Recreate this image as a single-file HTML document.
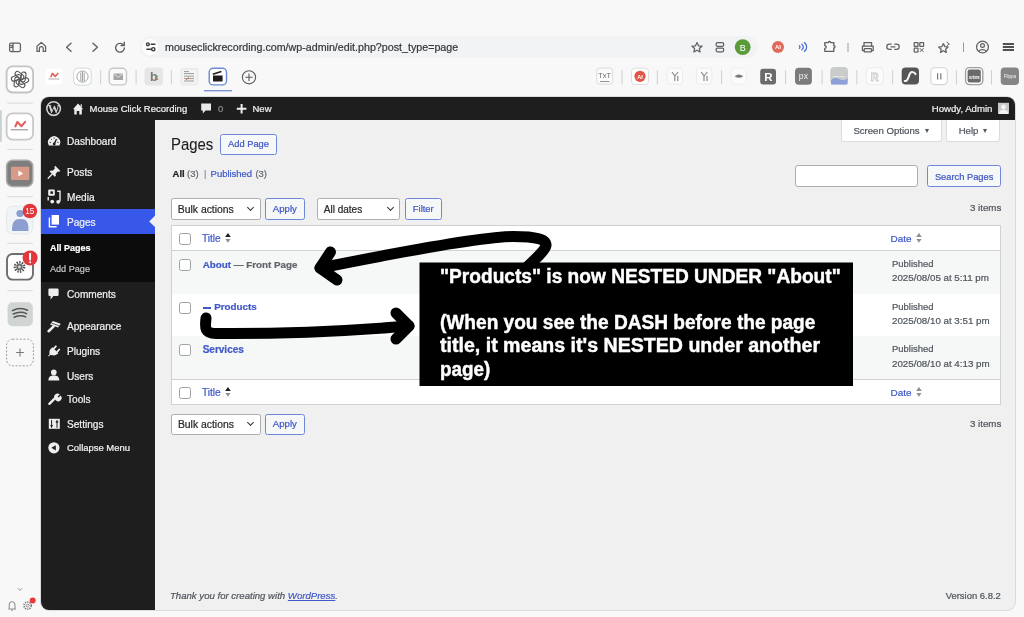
<!DOCTYPE html>
<html><head><meta charset="utf-8">
<style>
*{box-sizing:border-box;margin:0;padding:0}
html,body{width:1024px;height:617px;overflow:hidden;background:#f8f8f8;font-family:"Liberation Sans",sans-serif}
.a{position:absolute}
.t{position:absolute;white-space:nowrap;line-height:1}
#win{position:absolute;left:41px;top:97px;width:974.3px;height:512.8px;border-radius:8px;overflow:hidden;background:#f0f0f1;box-shadow:0 0 0 0.8px #d2d4d6}
#bar{position:absolute;left:0;top:0;width:975px;height:23px;background:#1e1e1e}
#menu{position:absolute;left:0;top:23px;width:114px;height:490px;background:#1e1e1e}
.mi{position:absolute;left:26px;color:#f0f0f0;font-size:10.1px;line-height:1;white-space:nowrap}
.btn{position:absolute;border:1px solid #7087d9;border-radius:2.5px;background:#f6f7f7;color:#3f57c7;font-size:9.5px;line-height:1;white-space:nowrap;display:flex;align-items:center;justify-content:center}
.sel{position:absolute;border:1px solid #aaadb1;border-radius:2.5px;background:#fff;color:#2a2a2a;font-size:10px;line-height:1;white-space:nowrap}
.cb{position:absolute;width:12px;height:12px;border:1px solid #9ea1a6;border-radius:2.5px;background:#fff}

.tab{top:119.5px;height:22.4px;background:#fff;border:1px solid #dcdcde;border-top:none;border-radius:0 0 3px 3px;box-shadow:0 0 0 0 #000}
.tri{width:0;height:0;border-left:2.6px solid transparent;border-right:2.6px solid transparent;border-top:4.2px solid #50575e}
.chev{position:absolute;width:5px;height:5px;border-right:1.1px solid #333;border-bottom:1.1px solid #333;transform:rotate(45deg)}
.sort{position:absolute;width:5.6px;height:10px}
.sort:before{content:"";position:absolute;left:0;top:-0.2px;border-left:3px solid transparent;border-right:3px solid transparent;border-bottom:4.4px solid #1e1e1e}
.sort:after{content:"";position:absolute;left:0.1px;top:5.8px;border-left:2.9px solid transparent;border-right:2.9px solid transparent;border-top:4.1px solid #9a9da2}
.t.ann{left:441px;font-size:20.3px;font-weight:bold;color:#fff;transform-origin:0 0;-webkit-text-stroke:0.45px #fff}
.t,.mi,.btn span{-webkit-text-stroke-width:0.22px}
#gw{position:absolute;left:0;top:0;width:1024px;height:617px;will-change:transform}
</style></head><body><div id="gw">


<!-- URL pill -->
<div class="a" style="left:139.8px;top:35.5px;width:618px;height:22px;border-radius:11px;background:#f2f3f4"></div>
<div class="a" style="left:142.2px;top:38.5px;width:16px;height:16px;border-radius:8px;background:#fff"></div>
<div class="t" style="left:165px;top:42.1px;font-size:10.7px;color:#383838">mouseclickrecording.com/wp-admin/edit.php?post_type=page</div>

<!-- BROWSER CHROME ICONS -->
<svg class="a" style="left:0;top:0" width="1024" height="617" viewBox="0 0 1024 617">
 <g fill="none" stroke="#606060" stroke-width="1.25" stroke-linecap="round" stroke-linejoin="round">
  <!-- sidebar -->
  <rect x="9.6" y="43.2" width="10.8" height="8.4" rx="1.6"/>
  <path d="M13 43.4 V51.4 M10.8 45.6 H12.2 M10.8 47.4 H12.2"/>
  <!-- home -->
  <path d="M37 51.4 V46.2 L41.3 42.4 L45.6 46.2 V51.4 H43.2 V48.6 A1.9 1.9 0 0 0 39.4 48.6 V51.4 Z"/>
  <!-- back / fwd -->
  <path d="M71 43.2 L66.6 47.2 L71 51.2" stroke-width="1.4"/>
  <path d="M93 43.2 L97.4 47.2 L93 51.2" stroke-width="1.4"/>
  <!-- reload -->
  <path d="M123.6 45.2 A4.4 4.4 0 1 0 124.4 48" stroke-width="1.4"/>
  <path d="M124.3 42.3 V45.6 H121" stroke-width="1.4"/>
  <!-- tune -->
  <g stroke="#3a3a3a" stroke-width="1.4"><circle cx="147.9" cy="44.3" r="1.4"/><path d="M151.2 44.3 H154.9"/>
  <circle cx="153.3" cy="49.2" r="1.6"/><path d="M146.9 49.2 H151.4"/></g>
  <!-- star -->
  <path d="M697 42.6 L698.5 45.8 L702 46.2 L699.4 48.5 L700.1 52 L697 50.2 L693.9 52 L694.6 48.5 L692 46.2 L695.5 45.8 Z"/>
  <!-- tabs -->
  <rect x="716.2" y="42.6" width="7.4" height="3.8" rx="1.2"/>
  <rect x="716.2" y="48" width="7.4" height="3.8" rx="1.2"/>
  <!-- puzzle -->
  <path d="M824.8 42.6 H828.4 A1.15 1.15 0 0 1 830.7 42.6 H833.8 V45.6 A1.2 1.2 0 0 1 833.8 48 V51.3 H824.8 V48.4 A1.4 1.4 0 0 0 824.8 45.6 Z" stroke-width="1.35"/>
  <!-- printer -->
  <path d="M864 46 V42.6 H871.6 V46"/>
  <path d="M864 50.6 H862.4 V46 H873.2 V50.6 H871.6"/>
  <rect x="864.2" y="48.6" width="7.2" height="3.2" rx="0.6"/>
  <!-- link -->
  <path d="M891.2 44.2 H889.4 A2.6 2.6 0 0 0 889.4 49.4 H891.2 M894.8 44.2 H896.6 A2.6 2.6 0 0 1 896.6 49.4 H894.8 M891 46.8 H895"/>
  <!-- qr -->
  <rect x="914.2" y="42.6" width="3.8" height="3.8" rx="0.5"/>
  <rect x="919.8" y="42.6" width="3.8" height="3.8" rx="0.5"/>
  <rect x="914.2" y="48.2" width="3.8" height="3.8" rx="0.5"/>
  <path d="M920 48.4 L923.4 51.8 M923.4 48.4 L920 51.8" stroke-width="1"/>
  <!-- star ai -->
  <path d="M943.4 43.6 L944.8 46.6 L948.2 47 L945.6 49.2 L946.3 52.4 L943.4 50.8 L940.5 52.4 L941.2 49.2 L938.6 47 L942 46.6 Z"/>
  <path d="M947.2 42 L948 43.4 L949.4 44 L948 44.6 L947.2 46" stroke-width="0.9"/>
  <!-- account -->
  <circle cx="982.5" cy="47" r="5.9"/>
  <circle cx="982.5" cy="45.4" r="1.9"/>
  <path d="M978.6 51.3 A4.4 3.2 0 0 1 986.4 51.3"/>
 </g>
 <!-- dividers -->
 <g stroke="#9a9a9a" stroke-width="1">
  <path d="M848 43 V52 M963.5 42.5 V52"/>
 </g>
 <!-- hamburger -->
 <path d="M1002.8 44 H1014 M1002.8 47 H1014 M1002.8 50 H1014" stroke="#505050" stroke-width="1.8"/>
 <!-- green B -->
 <circle cx="742.7" cy="47.2" r="7.9" fill="#5b9c3a"/>
 <text x="742.7" y="50.6" font-family="Liberation Sans" font-size="9" fill="#fff" text-anchor="middle">B</text>
 <!-- red AI -->
 <circle cx="778" cy="47" r="6" fill="#e06a5a"/>
 <text x="778" y="49.4" font-family="Liberation Sans" font-size="6" font-weight="bold" fill="#fff" text-anchor="middle">AI</text>
 <!-- blue waves -->
 <g fill="none" stroke="#4a6fd0" stroke-width="1.3" stroke-linecap="round">
  <path d="M799.4 45.8 A1.6 1.6 0 0 1 799.4 48.2"/>
  <path d="M801.8 44.2 A3.4 3.4 0 0 1 801.8 49.8"/>
  <path d="M804.4 42.6 A5.4 5.4 0 0 1 804.4 51.4"/>
 </g>
</svg>


<!-- EXTENSION ROW + LEFT RAIL -->
<svg class="a" style="left:0;top:0" width="1024" height="617" viewBox="0 0 1024 617" font-family="Liberation Sans">
 <!-- dividers row2 -->
 <g stroke="#cfcfcf" stroke-width="1">
  <path d="M100.6 70 V84.5 M136.1 70 V84.5 M171.4 70 V84.5 M622 70 V84.5 M657.3 70 V84.5 M721.6 70 V84.5 M785.6 70 V84.5 M822.1 70 V84.5 M856.8 70 V84.5 M892.6 70 V84.5 M956.4 70 V84.5 M991.5 70 V84.5"/>
 </g>
 <!-- netlify -->
 <rect x="45.6" y="68.7" width="16.9" height="15.8" rx="3" fill="#fff"/>
 <path d="M51 76.6 L52.4 73.4 L55.2 76.4 L57.8 73.4" fill="none" stroke="#e2605a" stroke-width="1.6" stroke-linecap="round" stroke-linejoin="round"/>
 <path d="M48.6 79 H59.4" stroke="#888" stroke-width="0.7"/>
 <!-- circle logo -->
 <rect x="73.7" y="68.1" width="17.5" height="17" rx="4" fill="#fff" stroke="#cfd9dc" stroke-width="1"/>
 <circle cx="82.5" cy="76.6" r="5.6" fill="none" stroke="#9a9a9a" stroke-width="0.9"/>
 <path d="M80.8 72.5 V81 M82.5 71.5 V81.5 M84.2 72.5 V81" stroke="#888" stroke-width="0.8"/>
 <!-- mail -->
 <rect x="109.2" y="68.3" width="17.3" height="16.6" rx="4" fill="#fafafa" stroke="#c6c9c9" stroke-width="1.4"/>
 <rect x="113.5" y="73.5" width="9.5" height="6.5" fill="#a5a5a5"/>
 <path d="M113.5 73.5 L118.25 77.3 L123 73.5" fill="none" stroke="#eee" stroke-width="0.8"/>
 <!-- b -->
 <rect x="144.4" y="67.6" width="18.6" height="18" rx="4" fill="#e6e6e6"/>
 <text x="153.7" y="81" font-size="12.5" font-weight="bold" fill="#7a7a7a" text-anchor="middle">b</text>
 <circle cx="157.2" cy="76.4" r="0.9" fill="#6fbf5a"/><circle cx="157.4" cy="79.2" r="0.9" fill="#e0704a"/>
 <!-- newspaper -->
 <rect x="180.4" y="67.8" width="18" height="17.6" rx="3" fill="#ececec"/>
 <rect x="182.5" y="70" width="13.8" height="13.4" fill="#f4f4f4"/>
 <path d="M184 71.6 H189 M184 73.6 H194 M184 76.2 H194 M184 78.6 H194 M184 81 H194" stroke="#9a9a9a" stroke-width="1"/>
 <path d="M186 80 L189 77.4" stroke="#d9534f" stroke-width="0.9"/>
 <!-- clapper -->
 <rect x="209.2" y="68.3" width="17.3" height="16.6" rx="4" fill="#fff" stroke="#6b89d4" stroke-width="1.4"/>
 <rect x="213" y="75.5" width="9.6" height="6" fill="#1e1e1e"/>
 <path d="M212.8 74.2 L221.4 71.4" stroke="#1e1e1e" stroke-width="1.6"/>
 <rect x="204" y="90" width="28" height="1.4" fill="#7b93d6"/>
 <!-- plus circle -->
 <circle cx="249" cy="77.3" r="6.6" fill="none" stroke="#5a5a5a" stroke-width="1.1"/>
 <path d="M249 73.6 V81 M245.3 77.3 H252.7" stroke="#5a5a5a" stroke-width="1.1"/>

 <!-- TxT -->
 <rect x="596.7" y="68.1" width="16" height="16" rx="3" fill="#fafafa" stroke="#dcdcdc" stroke-width="1"/>
 <text x="604.7" y="77.6" font-size="7.4" fill="#6a6a6a" text-anchor="middle">TxT</text>
 <path d="M600 81.5 H609.4" stroke="#7a7a7a" stroke-width="0.8"/>
 <!-- AI red 2 -->
 <rect x="631.5" y="68.1" width="17" height="16.4" rx="3.5" fill="#fff" stroke="#dedede" stroke-width="1"/>
 <circle cx="640" cy="76.3" r="5.6" fill="#e05548"/>
 <text x="640" y="78.6" font-size="5.6" font-weight="bold" fill="#fff" text-anchor="middle">AI</text>
 <!-- Y icons -->
 <rect x="667.2" y="68.2" width="15.4" height="16" rx="3" fill="#fbfbfb" stroke="#ececec" stroke-width="1"/>
 <path d="M672 72 L674.8 76 V81 M678 72 L675 76 M677.8 76 V81" fill="none" stroke="#8c8c8c" stroke-width="1.2"/>
 <rect x="696.4" y="68.2" width="15.4" height="16" rx="3" fill="#fbfbfb" stroke="#ececec" stroke-width="1"/>
 <path d="M701.2 72 L704 76 V81 M707.2 72 L704.2 76 M707 76 V81" fill="none" stroke="#8c8c8c" stroke-width="1.2"/>
 <!-- eye -->
 <rect x="731.2" y="68.2" width="15.4" height="16" rx="3" fill="#fbfbfb" stroke="#efefef" stroke-width="1"/>
 <path d="M734.6 76.2 Q738.9 72.6 743.2 76.2 Q738.9 79.4 734.6 76.2 Z" fill="#7a7a7a"/>
 <!-- R dark -->
 <rect x="760.2" y="68.7" width="15.8" height="15.8" rx="3" fill="#6b6b6b"/>
 <text x="768.3" y="80.8" font-size="11.5" font-weight="bold" fill="#fff" text-anchor="middle">R</text>
 <!-- px -->
 <rect x="795" y="67.8" width="16.9" height="17" rx="4" fill="#7b7b7b"/>
 <text x="803.4" y="78.8" font-size="8.6" fill="#f2f2f2" text-anchor="middle">px</text>
 <!-- wave -->
 <rect x="830.3" y="67.1" width="17.7" height="17.3" rx="4" fill="#c9cbcd"/>
 <path d="M831 80 Q835 76.5 839 79 T847.5 78.5 V84.4 H831 Z" fill="#8da0d8"/>
 <path d="M833 76.6 H845" stroke="#e6e6e6" stroke-width="1"/>
 <!-- R outline -->
 <rect x="866.2" y="67.8" width="17" height="16.8" rx="4" fill="#fcfcfc" stroke="#e6eced" stroke-width="1"/>
 <text x="874.7" y="80.6" font-size="11" font-weight="bold" fill="none" stroke="#c8c8c8" stroke-width="0.8" text-anchor="middle">R</text>
 <!-- flow -->
 <rect x="901.7" y="67.4" width="17.3" height="17.2" rx="4" fill="#555"/>
 <path d="M905.5 81 C909 81 908.5 72 912 72 C914 72 915 73 915.5 74" fill="none" stroke="#f4f4f4" stroke-width="2.2" stroke-linecap="round"/>
 <path d="M905.5 81 L904.8 81" stroke="#f4f4f4" stroke-width="2.2" stroke-linecap="round"/>
 <!-- pause -->
 <rect x="930.8" y="67.8" width="16.6" height="16.8" rx="4" fill="#fff" stroke="#d4d4d4" stroke-width="1.1"/>
 <path d="M937.6 73.2 V79.4 M940.8 73.2 V79.4" stroke="#7a7a7a" stroke-width="1.2"/>
 <!-- stm -->
 <rect x="965.6" y="67.6" width="17.2" height="17" rx="4" fill="#fff" stroke="#a0a0a0" stroke-width="1.4"/>
 <rect x="967.6" y="69.6" width="13.2" height="13" rx="2" fill="#6a6a6a"/>
 <text x="974.2" y="78.6" font-size="6" font-weight="bold" fill="#fff" text-anchor="middle">stm</text>
 <!-- flippa -->
 <rect x="1000.7" y="67.4" width="18.3" height="17.6" rx="4" fill="#858585"/>
 <text x="1009.9" y="78" font-size="4.6" fill="#f0f0f0" text-anchor="middle">Flippa</text>

 <!-- LEFT RAIL -->
 <g fill="none" stroke="#d9d9d9" stroke-width="1">
  <path d="M7.3 103.1 H32.8 M7.3 149.5 H32.8 M7.3 196.7 H32.8 M7.3 243.3 H32.8 M7.3 290.7 H32.8"/>
 </g>
 <rect x="0" y="110.4" width="1.8" height="31.4" fill="#c9d0d3"/>
 <!-- chatgpt -->
 <rect x="6.6" y="66.3" width="26.5" height="26.2" rx="6" fill="#fff" stroke="#c3c3c3" stroke-width="1.8"/>
 <g fill="none" stroke="#555" stroke-width="1.1" transform="translate(20 79.5) rotate(8)"><rect x="0.75" y="-7.90" width="4.50" height="9.80" rx="2.25" transform="rotate(0)"/><rect x="0.75" y="-7.90" width="4.50" height="9.80" rx="2.25" transform="rotate(60)"/><rect x="0.75" y="-7.90" width="4.50" height="9.80" rx="2.25" transform="rotate(120)"/><rect x="0.75" y="-7.90" width="4.50" height="9.80" rx="2.25" transform="rotate(180)"/><rect x="0.75" y="-7.90" width="4.50" height="9.80" rx="2.25" transform="rotate(240)"/><rect x="0.75" y="-7.90" width="4.50" height="9.80" rx="2.25" transform="rotate(300)"/></g>
 <!-- netlify rail -->
 <rect x="6.6" y="113.4" width="26.5" height="26.2" rx="6" fill="#fff" stroke="#c8c8c8" stroke-width="1.8"/>
 <path d="M15.4 126.4 L17.4 121.9 L21.4 126.2 L25.2 121.9" fill="none" stroke="#e2605a" stroke-width="2.1" stroke-linecap="round" stroke-linejoin="round"/>
 <path d="M10.8 129.8 H28" stroke="#777" stroke-width="0.9"/>
 <!-- youtube -->
 <rect x="6.6" y="160.3" width="26.2" height="26.1" rx="6" fill="#7e7e7e" stroke="#a9a9a9" stroke-width="1.5"/>
 <rect x="11" y="166.8" width="18.2" height="13.2" rx="1" fill="#d99a89"/>
 <path d="M18.4 170.6 L23.2 173.4 L18.4 176.2 Z" fill="#fff"/>
 <!-- person -->
 <rect x="6.6" y="206.2" width="26.2" height="27.8" rx="6" fill="#f1f4f6" stroke="#e4e8ea" stroke-width="1"/>
 <circle cx="20" cy="213.5" r="3.6" fill="#8a9fcf"/>
 <path d="M12 231 C12 222 14 219 20.5 219 C27 219 28.5 222 28.5 231 Z" fill="#8c9fd0"/>
 <circle cx="29.9" cy="211" r="7.3" fill="#e0383d"/>
 <text x="29.8" y="214" font-size="8.2" fill="#fff" text-anchor="middle">15</text>
 <!-- settings -->
 <rect x="7" y="254" width="26" height="25.6" rx="5.5" fill="#fff" stroke="#6d6d6d" stroke-width="1.9"/>
 <circle cx="19.5" cy="267" r="4.6" fill="none" stroke="#555" stroke-width="2.6" stroke-dasharray="1.4 1.2"/>
 <circle cx="19.5" cy="267" r="3.2" fill="#6a6a6a"/>
 <circle cx="19.5" cy="267" r="1.4" fill="#ddd"/>
 <circle cx="30.1" cy="257.9" r="7.5" fill="#e0383d"/>
 <path d="M30.1 253.6 V259.6" stroke="#fff" stroke-width="1.9" stroke-linecap="round"/>
 <circle cx="30.1" cy="262.3" r="1" fill="#fff"/>
 <!-- spotify -->
 <rect x="7.6" y="302.3" width="25.2" height="24" rx="5" fill="#d0d4d2"/>
 <g fill="none" stroke="#555" stroke-width="1.5" stroke-linecap="round">
  <path d="M12.4 310.6 Q20 306.8 27.6 310.2"/>
  <path d="M13.2 314 Q20 310.8 26.6 313.6"/>
  <path d="M14.2 317.2 Q20 314.6 25.6 316.8"/>
 </g>
 <!-- plus dashed -->
 <rect x="6.6" y="339.2" width="26.8" height="26.6" rx="6" fill="none" stroke="#9a9a9a" stroke-width="1" stroke-dasharray="2 1.6"/>
 <path d="M20 348.6 V356.4 M16.1 352.5 H23.9" stroke="#777" stroke-width="1.1"/>
 <!-- bottom -->
 <path d="M17.6 588.2 L19.8 590.4 L22 588.2" fill="none" stroke="#8a8a8a" stroke-width="0.9"/>
 <path d="M8.3 609 H16 M9.2 608.6 V605 A2.9 3.4 0 0 1 15 605 V608.6 M11.4 610.4 H12.8" fill="none" stroke="#7a7a7a" stroke-width="0.9"/>
 <circle cx="27.6" cy="605.6" r="3.6" fill="none" stroke="#7a7a7a" stroke-width="1.6" stroke-dasharray="1.3 1"/>
 <circle cx="27.6" cy="605.6" r="1.4" fill="none" stroke="#7a7a7a" stroke-width="0.8"/>
 <circle cx="32.7" cy="600.6" r="3" fill="#e63b3b"/>
</svg>
<div id="win">
  <div id="bar">
    <div class="t" style="left:48.5px;top:7px;font-size:9.5px;color:#f0f0f0">Mouse Click Recording</div>
    <div class="t" style="left:177px;top:7px;font-size:9.5px;color:#8c8f94">0</div>
    <div class="t" style="left:211.5px;top:7px;font-size:9.5px;color:#f0f0f0">New</div>
    <div class="t" style="left:890.8px;top:7.2px;font-size:9.6px;color:#f0f0f0">Howdy, Admin</div>
  </div>
  <div id="menu">
    <div class="mi" style="top:16.6px">Dashboard</div>
    <div class="mi" style="top:48.3px">Posts</div>
    <div class="mi" style="top:73px">Media</div>
    <div class="a" style="left:0;top:89px;width:114px;height:24.5px;background:#3858e9"></div>
    <div class="mi" style="top:98px">Pages</div>
    <div class="a" style="left:0;top:113.5px;width:114px;height:48px;background:#0c0c0c"></div>
    <div class="mi" style="left:9px;top:124.2px;font-size:9px;font-weight:bold;color:#fff">All Pages</div>
    <div class="mi" style="left:9px;top:144.5px;font-size:9.1px;color:#c5c5c5">Add Page</div>
    <div class="mi" style="top:170px">Comments</div>
    <div class="mi" style="top:202.2px">Appearance</div>
    <div class="mi" style="top:226.8px">Plugins</div>
    <div class="mi" style="top:251.8px">Users</div>
    <div class="mi" style="top:275.3px">Tools</div>
    <div class="mi" style="top:300.4px">Settings</div>
    <div class="mi" style="top:322.6px;font-size:9.45px">Collapse Menu</div>
  </div>
</div>



<!-- WP ICONS -->
<svg class="a" style="left:0;top:0" width="1024" height="617" viewBox="0 0 1024 617" font-family="Liberation Sans">
 <!-- admin bar -->
 <circle cx="53.6" cy="108.6" r="6.8" fill="none" stroke="#cfcfcf" stroke-width="1.6"/>
 <text x="53.7" y="112.8" font-family="Liberation Serif" font-size="12" font-weight="bold" fill="#d4d4d4" text-anchor="middle">W</text>
 <path d="M73 109.2 L78 103.6 L83.2 109.2 H81.8 V114.4 H79.3 V111 H76.7 V114.4 H74.3 V109.2 Z" fill="#f0f0f0"/>
 <path d="M81.2 104.2 V107" stroke="#f0f0f0" stroke-width="1.2"/>
 <path d="M201.2 103.6 H211 V110.6 H205.6 L202.8 113.6 V110.6 H201.2 Z" fill="#eaeaea"/>
 <path d="M241.6 104 V113.6 M236.8 108.8 H246.4" stroke="#f0f0f0" stroke-width="2"/>
 <rect x="998" y="102.8" width="11" height="11.1" fill="#c8c8c8"/>
 <circle cx="1003.5" cy="107" r="2.4" fill="#f5f5f5"/>
 <path d="M999 113.9 C999 110.6 1001 109.8 1003.5 109.8 C1006 109.8 1008 110.6 1008 113.9 Z" fill="#f5f5f5"/>

 <!-- sidebar -->
 <g fill="#eeeeee">
  <path d="M48.85 145.4 A6.1 6.1 0 1 1 59.35 145.4 Z"/>
  <path d="M63 0" />
 </g>
 <path d="M54.2 144 L56.4 139.2" stroke="#1e1e1e" stroke-width="1.4"/>
 <circle cx="54.2" cy="144" r="1.4" fill="#1e1e1e"/>
 <path d="M49.6 142.4 H51 M51 139 L51.9 139.9 M54.1 137.4 V138.8 M57.2 139 L56.3 139.9 M58.6 142.4 H57.2" stroke="#1e1e1e" stroke-width="0.8"/>
 <!-- pin -->
 <path d="M55.2 165.8 L60.4 171 L59.2 171.8 L57.9 171.5 L55.6 173.8 L55.9 175.8 L54.8 176.8 L49.6 171.6 L50.6 170.5 L52.6 170.8 L54.9 168.5 L54.4 167 Z" fill="#eeeeee"/>
 <path d="M52 174.2 L48.2 178.2" stroke="#eeeeee" stroke-width="1.3" stroke-linecap="round"/>
 <!-- media -->
 <rect x="48.2" y="189.4" width="6.6" height="6.4" rx="1" fill="#eeeeee"/>
 <rect x="50.4" y="191.4" width="2.6" height="2.4" fill="#1e1e1e"/>
 <path d="M48.2 197 V200.4 M57.2 191.2 H60 V201.4" stroke="#eeeeee" stroke-width="1.4" fill="none"/>
 <circle cx="52.2" cy="201.6" r="1.9" fill="#eeeeee"/><circle cx="58.2" cy="201.8" r="1.9" fill="#eeeeee"/>
 <!-- pages -->
 <rect x="51.6" y="215" width="7.4" height="9.6" fill="#fff"/>
 <path d="M49.4 217.4 V226.8 H56.6" fill="none" stroke="#fff" stroke-width="1.4"/>
 <!-- comments -->
 <path d="M49.6 288.4 H57.4 Q58.6 288.4 58.6 289.6 V294.8 Q58.6 296 57.4 296 H53.4 L50.6 299.4 V296 H49.6 Q48.4 296 48.4 294.8 V289.6 Q48.4 288.4 49.6 288.4 Z" fill="#eeeeee"/>
 <!-- appearance -->
 <path d="M52.8 321.1 L60.7 323.8 L58 327.5 L50.1 324.5 Z" fill="#eeeeee"/>
 <path d="M51.4 323 L59.4 325.9" stroke="#1e1e1e" stroke-width="0.7"/>
 <path d="M53.6 326.4 L48.6 331.2" stroke="#eeeeee" stroke-width="2.6" stroke-linecap="round"/>
 <!-- plugins -->
 <path d="M53.8 348.6 L55.9 346.3 M57.1 351.8 L59.2 349.5" stroke="#eeeeee" stroke-width="1.8" stroke-linecap="round"/>
 <path d="M52.4 347.2 L58.4 353.2 L55.8 355 C53.8 355.8 51.6 355.2 50.6 354.8 L48.8 356.4 L48.2 355.8 L49.6 354.2 C49.2 352.8 49.4 350.8 50.2 349.6 Z" fill="#eeeeee"/>
 <!-- users -->
 <circle cx="53.8" cy="372.4" r="2.8" fill="#eeeeee"/>
 <path d="M48.4 380.6 C48.4 376.8 50.6 375.6 53.8 375.6 C57 375.6 59.3 376.8 59.3 380.6 Z" fill="#eeeeee"/>
 <!-- tools -->
 <path d="M49.4 403.8 L55.4 397.8" stroke="#eeeeee" stroke-width="2.4" stroke-linecap="round"/>
 <path d="M54.6 398.6 A3.4 3.4 0 0 1 59.8 394.4 L57.6 396.6 L58.6 397.6 L60.6 395.6 A3.4 3.4 0 0 1 56 400.6 Z" fill="#eeeeee"/>
 <!-- settings -->
 <rect x="48.8" y="418.8" width="11" height="10" fill="#eeeeee"/>
 <path d="M51.6 420 V427.8 M57 420 V427.8" stroke="#1e1e1e" stroke-width="1"/>
 <path d="M50.4 425.6 H52.8 M55.8 422 H58.2" stroke="#1e1e1e" stroke-width="1.4"/>
 <!-- collapse -->
 <circle cx="53.9" cy="447.8" r="5.6" fill="#eeeeee"/>
 <path d="M51.4 447.8 L55.8 445.2 V450.4 Z" fill="#1e1e1e"/>
 <!-- current arrow -->
 <path d="M155 215.8 L149.2 221.4 L155 227 Z" fill="#f0f0f1"/>
</svg>
<!-- WP CONTENT -->
<div id="content">
  <!-- screen options / help tabs -->
  <div class="a tab" style="left:840.8px;width:100.8px"></div>
  <div class="t" style="left:853.4px;top:126.2px;font-size:9.6px;color:#50575e">Screen Options</div>
  <div class="a tri" style="left:924.8px;top:128.9px"></div>
  <div class="a tab" style="left:946.2px;width:54.3px"></div>
  <div class="t" style="left:958.7px;top:126.2px;font-size:9.6px;color:#50575e">Help</div>
  <div class="a tri" style="left:983.4px;top:128.9px"></div>

  <div class="t" style="left:171.2px;top:136.6px;font-size:15.7px;color:#1e1e1e;transform:scaleX(0.95);transform-origin:0 0;-webkit-text-stroke-width:0.1px">Pages</div>
  <div class="btn" style="left:220px;top:133.5px;width:57px;height:21.5px"><span style="font-size:9.3px;position:relative;top:0.8px">Add Page</span></div>

  <div class="t" style="left:172.6px;top:168.6px;font-size:9.45px;font-weight:bold;color:#1e1e1e">All</div>
  <div class="t" style="left:187px;top:168.6px;font-size:9.45px;color:#646970">(3)</div>
  <div class="t" style="left:204px;top:168.6px;font-size:9.45px;color:#8c8f94">|</div>
  <div class="t" style="left:210.6px;top:168.6px;font-size:9.45px;color:#4059c9">Published</div>
  <div class="t" style="left:255.4px;top:168.6px;font-size:9.45px;color:#646970">(3)</div>

  <div class="a" style="left:794.8px;top:165.1px;width:123.6px;height:21.8px;background:#fff;border:1px solid #aaadb1;border-radius:3px"></div>
  <div class="btn" style="left:927px;top:165.2px;width:74.2px;height:21.8px"><span style="font-size:9.3px;position:relative;top:1.2px">Search Pages</span></div>

  <div class="t" style="left:969.9px;top:203.4px;font-size:9.75px;color:#50575e">3 items</div>

  <div class="sel" style="left:171px;top:198.2px;width:89.5px;height:21.8px"><span class="t" style="left:5.8px;top:5.9px;font-size:10.4px">Bulk actions</span><span class="chev" style="left:76.4px;top:5.6px"></span></div>
  <div class="btn" style="left:265px;top:198.2px;width:39.7px;height:21.8px"><span style="font-size:9.6px">Apply</span></div>
  <div class="sel" style="left:317px;top:198.2px;width:83px;height:21.8px"><span class="t" style="left:5.8px;top:5.9px">All dates</span><span class="chev" style="left:69.9px;top:5.6px"></span></div>
  <div class="btn" style="left:404.5px;top:198.2px;width:37.5px;height:21.8px"><span style="font-size:9.4px">Filter</span></div>

  <!-- table -->
  <div class="a" style="left:171px;top:224.6px;width:830px;height:180.6px;background:#fff;border:1px solid #d0d1d3"></div>
  <div class="a" style="left:172px;top:250px;width:828px;height:1px;background:#d0d1d3"></div>
  <div class="a" style="left:172px;top:251px;width:828px;height:43px;background:#f6f7f7"></div>
  <div class="a" style="left:172px;top:336px;width:828px;height:43px;background:#f6f7f7"></div>
  <div class="a" style="left:172px;top:379px;width:828px;height:1px;background:#d0d1d3"></div>

  <div class="cb" style="left:179.1px;top:233.3px"></div>
  <div class="t" style="left:202px;top:234.4px;font-size:10.1px;color:#4059c9">Title</div>
  <svg class="a" style="left:225.2px;top:233px" width="8" height="12" viewBox="0 0 8 12"><path d="M0.1 4.1 L2.95 0 L5.8 4.1 Z" fill="#1e1e1e"/><path d="M0.4 6 L5.5 6 L2.95 9.8 Z" fill="#8c8f94"/></svg>
  <div class="t" style="left:890.6px;top:233.8px;font-size:9.95px;color:#4059c9">Date</div>
  <svg class="a" style="left:915.8px;top:233px" width="8" height="12" viewBox="0 0 8 12"><path d="M0.1 4.1 L2.95 0 L5.8 4.1 Z" fill="#8c8f94"/><path d="M0.4 6 L5.5 6 L2.95 9.8 Z" fill="#8c8f94"/></svg>

  <div class="cb" style="left:179.1px;top:259.3px"></div>
  <div class="t" style="left:202.7px;top:259.7px;font-size:9.8px;font-weight:bold;color:#4059c9">About <span style="color:#62676c">— Front Page</span></div>
  <div class="t" style="left:892px;top:259.2px;font-size:9.45px;color:#50575e">Published</div>
  <div class="t" style="left:892px;top:272.7px;font-size:9.75px;color:#50575e">2025/08/05 at 5:11 pm</div>

  <div class="cb" style="left:179.1px;top:301.8px"></div>
  <div class="a" style="left:202.8px;top:307.4px;width:8px;height:1.2px;background:#4059c9"></div>
  <div class="t" style="left:214.2px;top:302px;font-size:9.8px;font-weight:bold;color:#4059c9">Products</div>
  <div class="t" style="left:892px;top:301.8px;font-size:9.45px;color:#50575e">Published</div>
  <div class="t" style="left:892px;top:315.9px;font-size:9.75px;color:#50575e">2025/08/10 at 3:51 pm</div>

  <div class="cb" style="left:179.1px;top:344.3px"></div>
  <div class="t" style="left:202.7px;top:344.6px;font-size:10px;font-weight:bold;color:#4059c9">Services</div>
  <div class="t" style="left:892px;top:344.1px;font-size:9.45px;color:#50575e">Published</div>
  <div class="t" style="left:892px;top:358.5px;font-size:9.75px;color:#50575e">2025/08/10 at 4:13 pm</div>

  <div class="cb" style="left:179.1px;top:387px"></div>
  <div class="t" style="left:202px;top:388.2px;font-size:10.1px;color:#4059c9">Title</div>
  <svg class="a" style="left:225.2px;top:387px" width="8" height="12" viewBox="0 0 8 12"><path d="M0.1 4.1 L2.95 0 L5.8 4.1 Z" fill="#1e1e1e"/><path d="M0.4 6 L5.5 6 L2.95 9.8 Z" fill="#8c8f94"/></svg>
  <div class="t" style="left:890.6px;top:387.6px;font-size:9.95px;color:#4059c9">Date</div>
  <svg class="a" style="left:915.8px;top:387px" width="8" height="12" viewBox="0 0 8 12"><path d="M0.1 4.1 L2.95 0 L5.8 4.1 Z" fill="#8c8f94"/><path d="M0.4 6 L5.5 6 L2.95 9.8 Z" fill="#8c8f94"/></svg>

  <div class="sel" style="left:171.1px;top:413.6px;width:89.5px;height:21px"><span class="t" style="left:5.8px;top:5.4px;font-size:10.4px">Bulk actions</span><span class="chev" style="left:76.4px;top:5.6px"></span></div>
  <div class="btn" style="left:265px;top:413.6px;width:39.7px;height:21px"><span style="font-size:9.6px">Apply</span></div>
  <div class="t" style="left:969.9px;top:419.3px;font-size:9.75px;color:#50575e">3 items</div>

  <div class="t" style="left:170px;top:590.6px;font-size:9.6px;font-style:italic;color:#50575e">Thank you for creating with <span style="color:#4059c9;text-decoration:underline">WordPress</span>.</div>
  <div class="t" style="left:945.7px;top:590.9px;font-size:9.45px;color:#50575e">Version 6.8.2</div>
</div>

<!-- ANNOTATION -->
<svg class="a" style="left:0;top:0" width="1024" height="617" viewBox="0 0 1024 617">
  <g fill="none" stroke="#000" stroke-width="11" stroke-linecap="round" stroke-linejoin="round">
    <path d="M320 268 Q477.5 236.5 513 236.5 C535 236.5 549 239 545.5 247 C543 253 536 258 522 272"/>
    <path d="M330.5 252 L320 268 L337 280"/>
    <path d="M206 318 C205.5 326 203 333.5 216 333.5 C280 334 350 331 409 326"/>
    <path d="M396 313 L409 326 L396 339"/>
  </g>
  <rect x="419.5" y="262.5" width="433.5" height="123.5" fill="#000"/>
</svg>
<div class="t ann" style="left:440.4px;top:265.7px;transform:scaleX(0.943)">"Products" is now NESTED UNDER "About"</div>
<div class="t ann" style="left:440.4px;top:312.3px;transform:scaleX(0.941)">(When you see the DASH before the page</div>
<div class="t ann" style="left:440.4px;top:335.4px;transform:scaleX(0.9655)">title, it means it's NESTED under another</div>
<div class="t ann" style="left:440.4px;top:359.1px;transform:scaleX(0.93)">page)</div>
</div></body></html>
